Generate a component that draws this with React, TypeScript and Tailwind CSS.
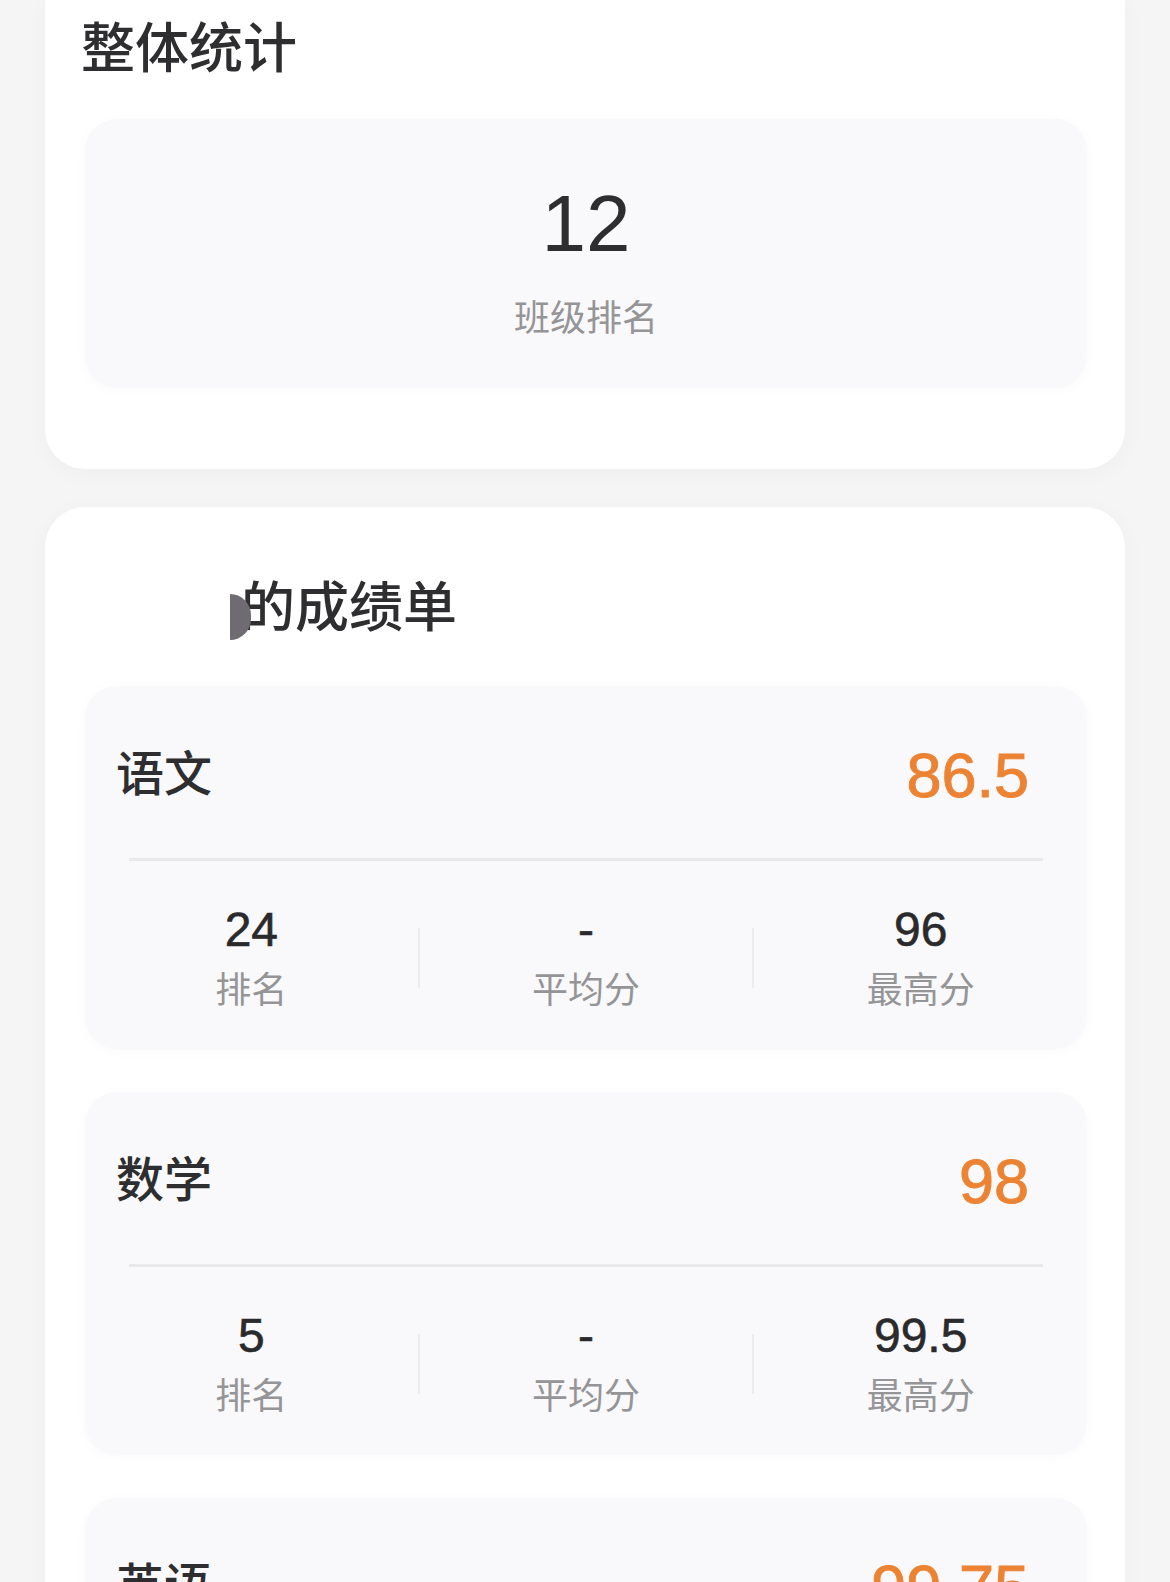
type Subject = {
  name: string;
  score: string;
  rank: string;
  avg: string;
  max: string;
};

const subjects: Subject[] = [
  { name: '语文', score: '86.5', rank: '24', avg: '-', max: '96' },
  { name: '数学', score: '98', rank: '5', avg: '-', max: '99.5' },
  { name: '英语', score: '99.75', rank: '3', avg: '-', max: '100' },
];

function StatCell({ value, label }: { value: string; label: string }) {
  return (
    <div className="flex-1 flex flex-col items-center">
      <span className="text-[48px] leading-[56px] text-[#2a2a2c] [-webkit-text-stroke:0.6px_#2a2a2c]">{value}</span>
      <span className="mt-[11px] text-[36px] leading-[44px] text-[#959597]">{label}</span>
    </div>
  );
}

function SubjectCard({ s }: { s: Subject }) {
  return (
    <div className="rounded-[32px] bg-[#f9f9fb] shadow-[0_2px_14px_rgba(0,0,0,0.025)] pb-[36px]">
      {/* Name + score */}
      <div className="h-[172px] pt-[6px] pl-[31px] pr-[58px] flex items-center justify-between">
        <span className="text-[48px] leading-[60px] font-medium text-[#2e2e30]">{s.name}</span>
        <span className="text-[63px] leading-[70px] text-[#ec8333] [-webkit-text-stroke:1px_#ec8333]">{s.score}</span>
      </div>
      <div className="mx-[44px] h-[3px] bg-[#e9e9ec]" />

      {/* Rank / avg / max */}
      <div className="mt-[41px] flex items-center">
        <StatCell value={s.rank} label="排名" />
        <div className="w-[2px] h-[60px] bg-[#ececef]" />
        <StatCell value={s.avg} label="平均分" />
        <div className="w-[2px] h-[60px] bg-[#ececef]" />
        <StatCell value={s.max} label="最高分" />
      </div>
    </div>
  );
}

export default function App() {
  return (
    <div
      className="min-h-[1582px] bg-[#f5f5f6] px-[45px] overflow-hidden"
      style={{ fontFamily: '"Liberation Sans", "Noto Sans CJK SC", sans-serif' }}
    >
      {/* 整体统计 */}
      <section className="rounded-b-[40px] bg-white shadow-[0_4px_24px_rgba(0,0,0,0.03)] pl-[40px] pr-[38px] pb-[81px]">
        <div className="h-[98px] flex items-center -ml-1">
          <h2 className="text-[54px] leading-[64px] font-medium text-[#2e2e30]">整体统计</h2>
        </div>
        <div className="mt-[21px] h-[269px] rounded-[32px] bg-[#f9f9fb] shadow-[0_2px_14px_rgba(0,0,0,0.025)] flex flex-col items-center">
          <span className="mt-[61px] text-[80px] leading-[88px] text-[#2e2e30]">12</span>
          <span className="mt-[29px] text-[36px] leading-[44px] text-[#959597]">班级排名</span>
        </div>
      </section>

      {/* 成绩单 */}
      <section className="mt-[38px] rounded-[40px] bg-white shadow-[0_4px_24px_rgba(0,0,0,0.03)] pl-[40px] pr-[38px] pt-[52px] pb-[60px]">
        <div className="h-[98px] flex items-center -ml-1">
          <div className="relative flex items-center">
            <span className="w-[160px] h-[60px]" />
            <span className="absolute left-[149px] top-[18px] w-[21px] h-[46px] rounded-r-full bg-[#6f6b73]" />
            <h2 className="text-[54px] leading-[64px] font-medium text-[#2e2e30]">的成绩单</h2>
          </div>
        </div>
        <div className="mt-[29px] flex flex-col gap-[43px]">
          {subjects.map((s) => (
            <SubjectCard key={s.name} s={s} />
          ))}
        </div>
      </section>
    </div>
  );
}
